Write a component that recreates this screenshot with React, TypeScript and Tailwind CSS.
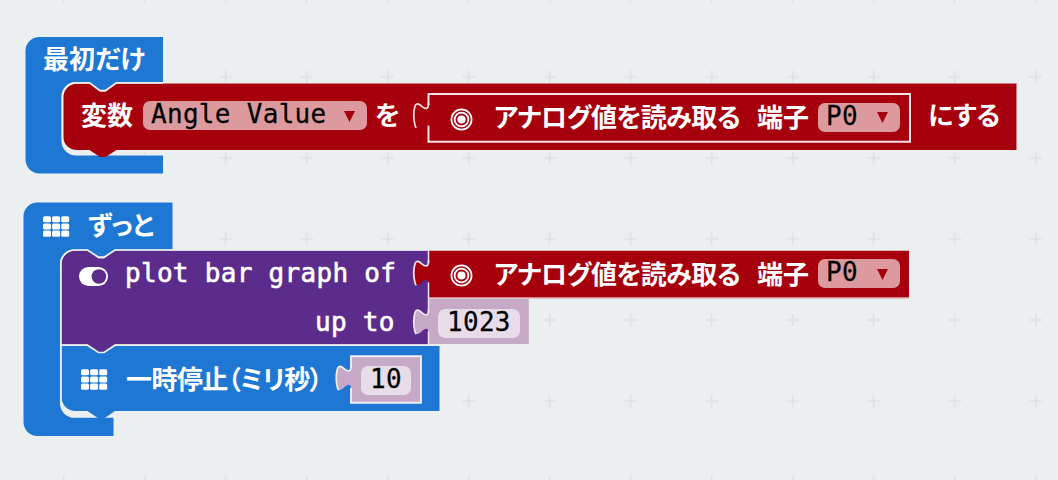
import type { ReactNode } from "react";

const JP = "font-['Noto_Sans_CJK_JP',sans-serif] font-bold [font-feature-settings:'palt']";
const MONO = "font-['DejaVu_Sans_Mono',monospace]";

function Label({ className, children }: { className: string; children: ReactNode }) {
  return <span className={`block shrink-0 whitespace-pre text-white ${className}`}>{children}</span>;
}

function Field({ className, text, arrow = false }: { className: string; text: string; arrow?: boolean }) {
  return (
    <span className={`flex shrink-0 items-center justify-between rounded-[7px] ${arrow ? "bg-[#dc9a9f]" : "bg-[#e8dce8]"} ${className}`}>
      <span className={`${MONO} -mt-[2px] block origin-center scale-y-105 whitespace-pre text-[26px] leading-[29px] tracking-[0.3px] text-black [-webkit-text-stroke:0.25px_black]`}>{text}</span>
      {arrow && (
        <svg className="mt-px h-[11px] w-[11px] shrink-0" viewBox="0 0 11 11">
          <path d="M0 0H11L5.5 11Z" fill="#a5000c" />
        </svg>
      )}
    </span>
  );
}

function GridIcon({ className }: { className: string }) {
  return (
    <svg className={`h-[21px] w-[27px] shrink-0 ${className}`} viewBox="0 0 27 21" fill="#fff">
      {[0.2, 7.4, 14.6].map((y) =>
        [0, 9.1, 18.2].map((x) => <rect key={`${x}-${y}`} x={x} y={y} width="8" height="6.1" rx="1.5" />),
      )}
    </svg>
  );
}

function TargetIcon({ className }: { className: string }) {
  return (
    <svg className={`h-[23px] w-[23px] shrink-0 ${className}`} viewBox="0 0 23 23" fill="none" stroke="#fff">
      <circle cx="11.5" cy="11.5" r="10.1" strokeWidth="1.7" />
      <circle cx="11.5" cy="11.5" r="6.9" strokeWidth="1.8" />
      <circle cx="11.5" cy="11.5" r="4.1" fill="#fff" stroke="none" />
    </svg>
  );
}

function ToggleIcon({ className }: { className: string }) {
  return (
    <svg className={`h-[19px] w-[29px] shrink-0 ${className}`} viewBox="0 0 29 19">
      <rect width="29" height="19" rx="9.5" fill="#fff" />
      <circle cx="19.9" cy="9.5" r="7.3" fill="#5c2c8c" />
    </svg>
  );
}

function PlugTab({ x, y, fill, stroke }: { x: number; y: number; fill: string; stroke: string }) {
  return (
    <g transform={`translate(${x} ${y})`}>
      <path
        d="M1 0H0C0 6-3.200 5.500-6.700 2.500C-9.700-.5-12.200-1-13.400 2C-14.900 7-14.900 16-13.400 22C-12.200 25-9.700 24-6.700 21C-3.700 18 0 17 0 22.500H1Z"
        fill={fill}
      />
      <path
        d="M0 -1V0C0 6-3.200 5.500-6.700 2.500C-9.700-.5-12.200-1-13.400 2C-14.900 7-14.900 16-13.400 22L-12.300 24"
        fill="none"
        stroke={stroke}
        strokeWidth="1.700"
      />
    </g>
  );
}

function AnalogRead({ className }: { className: string }) {
  return (
    <div className={`flex items-center ${className}`}>
      <TargetIcon className="mt-[2px]" />
      <Label className={`${JP} -mt-[4px] ml-[21px] w-[263px] text-[26px] leading-[30px] tracking-[-0.5px]`}>アナログ値を読み取る</Label>
      <Label className={`${JP} -mt-[4px] w-[61px] text-[26px] leading-[30px]`}>端子</Label>
      <Field arrow text="P0" className="-mt-[2px] h-[29px] w-[82px] pr-[12px] pl-[8px]" />
    </div>
  );
}

function StartStack() {
  return (
    <section className="absolute top-[30px] left-[20px] h-[150px] w-[1010px]">
      <svg className="absolute inset-0 h-[150px] w-[1010px]" viewBox="20 30 1010 150">
        <path
          d="M39.5 37H163V82H116.5L105.5 90.5H100L89.5 82H76A14.4 14.4 0 0 0 61.5 96.4V141A14.4 14.4 0 0 0 76 155.4H163V173.5H39.5A14 14 0 0 1 25.5 159.5V51A14 14 0 0 1 39.5 37Z"
          fill="#1e77d3"
        />
        <path
          d="M77 83.5H89.5L100 91.5H105.5L116.5 83.5H1016.5V150H116.5L105.5 157H100L89.5 150H77A14 14 0 0 1 63 136V97.5A14 14 0 0 1 77 83.5Z"
          fill="#a5000c"
        />
        <path d="M62.6 141V97.5A14 14 0 0 1 77 82.8H89.5L100 90.6H105.5L116.5 82.8H163" fill="none" stroke="#eceff0" strokeWidth="1.8" />
        <path d="M163 83.5H1016.5V150" fill="none" stroke="#d28086" strokeWidth="0.8" />
        <PlugTab x={428.5} y={103.8} fill="#a5000c" stroke="#f3e3e4" />
        <path d="M428.5 105V94H910V141.8H428.5V125.5" fill="none" stroke="#f3e3e4" strokeWidth="2" />
      </svg>
      <div className="relative flex flex-col">
        <Label className={`${JP} mt-[13px] ml-[23px] text-[26px] leading-[30px]`}>最初だけ</Label>
        <div className="mt-[28px] ml-[61px] flex h-[29px] items-center">
          <Label className={`${JP} -mt-[4px] w-[62px] text-[26px] leading-[30px]`}>変数</Label>
          <Field arrow text="Angle Value" className="h-[29px] w-[224px] pr-[12px] pl-[8px]" />
          <Label className={`${JP} -mt-[4px] ml-[8px] w-[75px] text-[26px] leading-[30px]`}>を</Label>
          <AnalogRead className="mt-[5px] w-[478px]" />
          <Label className={`${JP} -mt-[4px] text-[26px] leading-[30px] tracking-[-0.3px]`}>にする</Label>
        </div>
      </div>
    </section>
  );
}

function ForeverStack() {
  return (
    <section className="absolute top-[195px] left-[20px] h-[250px] w-[900px]">
      <svg className="absolute inset-0 h-[250px] w-[900px]" viewBox="20 195 900 250">
        <path
          d="M37.5 202.5H172.5V249.5H115L104 257.5H98.5L87.5 249.5H74.5A14.4 14.4 0 0 0 60 264V403.5A14.4 14.4 0 0 0 74.5 417.8H113.5V436H37.5A14 14 0 0 1 23.5 422V216.5A14 14 0 0 1 37.5 202.5Z"
          fill="#1e77d3"
        />
        <path
          d="M61.5 345.5H439.5V411H115L104 418.5H98.5L87.5 411H75.5A14 14 0 0 1 61.5 397Z"
          fill="#1e77d3"
        />
        <path
          d="M75.5 250.5H87.5L98.5 258.5H104L115 250.5H428V344.5H115L104 352H98.5L87.5 344.5H61.5V264.5A14 14 0 0 1 75.5 250.5Z"
          fill="#5c2c8c"
        />
        <path d="M60.800 403V264.5A14 14 0 0 1 75.5 250H87.5L98.5 257.2H104L115 250H428" fill="none" stroke="#eceff0" strokeWidth="1.7" />
        <path d="M61 345.2H87.5L98.5 352.5H104L115 345.2H529" fill="none" stroke="#eceff0" strokeWidth="1.7" />
        <path d="M428.500 250.8H909V297.5H428.500Z" fill="#a5000c" />
        <path d="M428.500 298.8H528.8V344H428.500Z" fill="#c5a9c6" />
        <PlugTab x={428.5} y={261.3} fill="#a5000c" stroke="#eee5ef" />
        <PlugTab x={428.5} y={310.2} fill="#c5a9c6" stroke="#eee5ef" />
        <path d="M428.500 251V263M428.500 282.500V312M428.500 331.500V344" stroke="#eee5ef" strokeWidth="1.500" />
        <path d="M428.8 298.3H909" stroke="#e6bfc5" strokeWidth="1.2" />
        <path d="M351 356.500H421V402.500H351Z" fill="#c5a9c6" />
        <PlugTab x={351} y={366.3} fill="#c5a9c6" stroke="#f1edf5" />
        <path d="M351 368V356.200H421V402.700H351V388" fill="none" stroke="#f1edf5" strokeWidth="1.9" />
      </svg>
      <div className="relative flex flex-col">
        <div className="mt-[15px] ml-[23px] flex h-[30px] items-center">
          <GridIcon className="mt-[2px]" />
          <Label className={`${JP} -mt-[3px] ml-[18px] text-[26px] leading-[30px] tracking-[-0.5px]`}>ずっと</Label>
        </div>
        <div className="mt-[19px] ml-[59px] flex h-[30px] items-center">
          <ToggleIcon className="mt-[5px]" />
          <Label className={`${MONO} -mt-[3px] ml-[17px] w-[325px] text-[26px] leading-[30px] tracking-[0.3px] [-webkit-text-stroke:0.6px_white]`}>plot bar graph of</Label>
          <AnalogRead className="mt-[1px]" />
        </div>
        <div className="mt-[19px] ml-[295px] flex h-[30px] items-center">
          <Label className={`${MONO} -mt-[3px] w-[123px] text-[26px] leading-[30px] tracking-[0.3px] [-webkit-text-stroke:0.6px_white]`}>up to</Label>
          <Field text="1023" className="h-[29px] w-[82px] pl-[9px]" />
        </div>
        <div className="mt-[27px] ml-[61px] flex h-[30px] items-center">
          <GridIcon className="-mt-[1px]" />
          <Label className={`${JP} -mt-[5px] ml-[18px] w-[235px] text-[26px] leading-[30px] tracking-[-0.6px]`}>一時停止（ミリ秒）</Label>
          <Field text="10" className="h-[29px] w-[50px] pl-[9px]" />
        </div>
      </div>
    </section>
  );
}

export default function App() {
  return (
    <main className="relative h-[480px] w-[1058px] overflow-hidden bg-[#eceff0]">
      <svg className="absolute inset-0 h-full w-full">
        <defs>
          <pattern id="marks" x="23.2" y="36.5" width="81" height="81" patternUnits="userSpaceOnUse">
            <path d="M34 40.500H47M40.500 34V47" stroke="#dce0e1" strokeWidth="1.500" />
          </pattern>
        </defs>
        <rect width="1058" height="480" fill="url(#marks)" />
      </svg>
      <StartStack />
      <ForeverStack />
    </main>
  );
}
